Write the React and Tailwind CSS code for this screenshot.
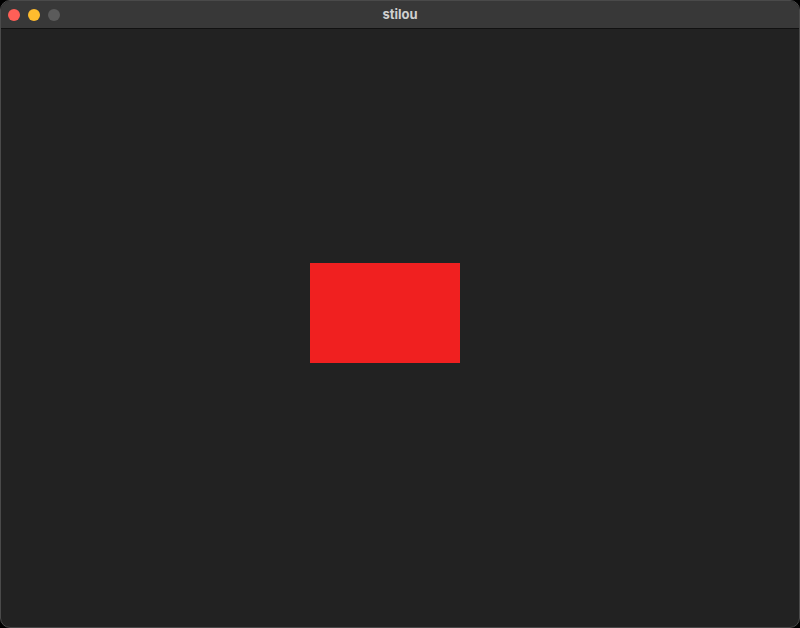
export default function App() {
  return (
    <div className="h-[628px] w-[800px] bg-black">
      <div className="flex h-full w-full flex-col overflow-hidden rounded-[10px] border border-[#4a4a4a] bg-[#222222]">
        {/* Title bar */}
        <div className="relative flex h-[28px] shrink-0 items-center border-b border-[#111111] bg-[#383838]">
          <div className="flex items-center gap-[8px] pl-[7px]">
            <span className="h-[12px] w-[12px] rounded-full bg-[#ff5f57]" />
            <span className="h-[12px] w-[12px] rounded-full bg-[#febc2e]" />
            <span className="h-[12px] w-[12px] rounded-full bg-[#5b5b5b]" />
          </div>
          <div className="absolute inset-0 flex items-center justify-center font-['Inter',sans-serif] text-[13px] font-bold text-[#cfcfcf]">
            stilou
          </div>
        </div>
        {/* Canvas */}
        <div className="flex-1 pl-[309px] pt-[234px]">
          <div className="h-[100px] w-[150px] bg-[#f02020]" />
        </div>
      </div>
    </div>
  );
}
